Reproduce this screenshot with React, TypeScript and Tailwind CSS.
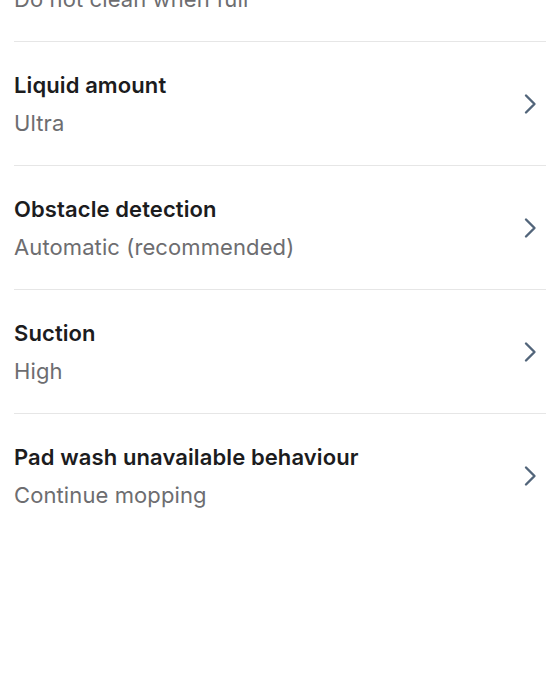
import React from "react";

const rows = [
  { title: "Cleaning behaviour", value: "Do not clean when full" },
  { title: "Liquid amount", value: "Ultra" },
  { title: "Obstacle detection", value: "Automatic (recommended)" },
  { title: "Suction", value: "High" },
  { title: "Pad wash unavailable behaviour", value: "Continue mopping" },
];

function Chevron() {
  return (
    <svg width="14" height="22" viewBox="0 0 14 22" fill="none">
      <path d="M3 2.5L11.5 11L3 19.5" stroke="#52657a" strokeWidth="2.4" strokeLinecap="round" strokeLinejoin="round" />
    </svg>
  );
}

export default function App() {
  return (
    <div className="w-[560px] h-[700px] bg-white overflow-hidden" style={{ fontFamily: "Inter, 'Noto Sans', sans-serif" }}>
      <div className="mt-[-82px] px-[14px]">
        {rows.map((r, i) => (
          <div key={i} className={"flex items-center justify-between " + (i < rows.length - 1 ? "border-b border-[#e6e6e6]" : "")}>
            <div className="pt-[29px] pb-[28px] flex flex-col gap-[10px]">
              <div className="text-[22px] leading-[28px] font-semibold tracking-[0.1px] text-[#1c1c1e]">{r.title}</div>
              <div className="text-[22px] leading-[28px] tracking-[0.1px] text-[#6d6d70]">{r.value}</div>
            </div>
            <div className="mr-[9px]"><Chevron /></div>
          </div>
        ))}
      </div>
    </div>
  );
}
